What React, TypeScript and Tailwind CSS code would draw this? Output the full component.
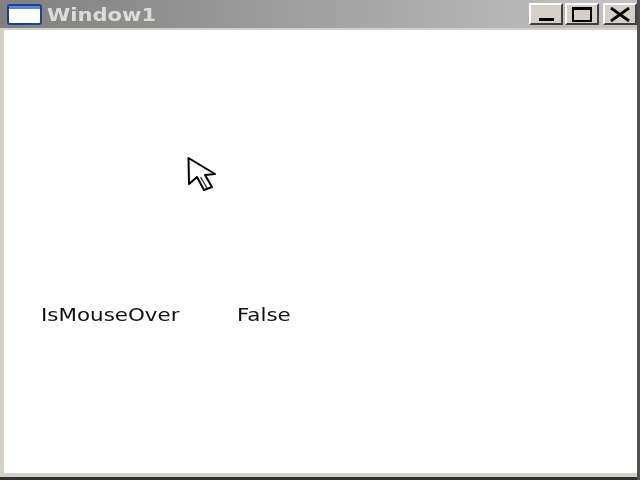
import React from "react"

function CaptionButton({ children, className = "" }: { children: React.ReactNode; className?: string }) {
  return (
    <div className={`w-[34px] h-[22px] flex items-center justify-center bg-[#d4d0c8] border-t-2 border-l-2 border-t-white border-l-white border-b-2 border-r-2 border-b-[#404040] border-r-[#404040] ${className}`}>
      {children}
    </div>
  )
}

export default function App() {
  return (
    <div className="w-[640px] h-[480px] flex flex-col bg-[#d4d0c8] overflow-hidden relative font-['DejaVu_Sans',sans-serif] blur-[0.7px]">
      {/* title bar */}
      <div className="h-[28px] flex items-center pl-[7px] pr-[3px] bg-gradient-to-r from-[#808080] to-[#c4c4c4] shrink-0">
        <svg width="35" height="21" viewBox="0 0 35 21" className="shrink-0">
          <rect x="1" y="1" width="33" height="19" rx="2" fill="#ffffff" stroke="#1c3f9e" strokeWidth="2" />
          <rect x="2" y="2" width="31" height="3" fill="#5a86d6" />
        </svg>
        <span className="ml-[5px] text-[18px] font-bold text-[#dcdcd8] inline-block origin-left scale-x-[1.17]">Window1</span>
        <div className="ml-auto flex gap-[2px]">
          <CaptionButton>
            <div className="w-[15px] h-[3px] bg-black mt-[10px]" />
          </CaptionButton>
          <CaptionButton>
            <div className="w-[20px] h-[15px] border-2 border-t-[3px] border-black" />
          </CaptionButton>
          <CaptionButton className="ml-[2px]">
            <svg width="20" height="15" viewBox="0 0 20 15">
              <path d="M1 1 L19 14 M19 1 L1 14" stroke="#000" strokeWidth="2.8" />
            </svg>
          </CaptionButton>
        </div>
      </div>

      {/* client area */}
      <div className="relative flex-1 mt-[2px] ml-[4px] mr-[3px] mb-[7px] bg-white">
        <div className="flex items-center pt-[271px] pl-[37px] text-[18px] text-[#101010]">
          <span className="w-[196px] inline-block origin-left scale-x-[1.19]">IsMouseOver</span>
          <span className="inline-block origin-left scale-x-[1.19]">False</span>
        </div>
        {/* cursor */}
        <svg width="32" height="40" viewBox="0 0 32 40" className="absolute left-[182px] top-[126px]">
          <path d="M2.5 2 L3 28 L11 21 L18 34 L26 31 L19 19 L29 18 Z" fill="#fff" stroke="#000" strokeWidth="2" strokeLinejoin="round" />
          <path d="M14.5 21 L21 32" stroke="#333" strokeWidth="1.4" />
        </svg>
      </div>
      <div className="absolute left-0 right-0 bottom-0 h-[3px] bg-[#303030]" />
      <div className="absolute top-0 bottom-0 right-0 w-[3px] bg-[#505050]" />
    </div>
  )
}
